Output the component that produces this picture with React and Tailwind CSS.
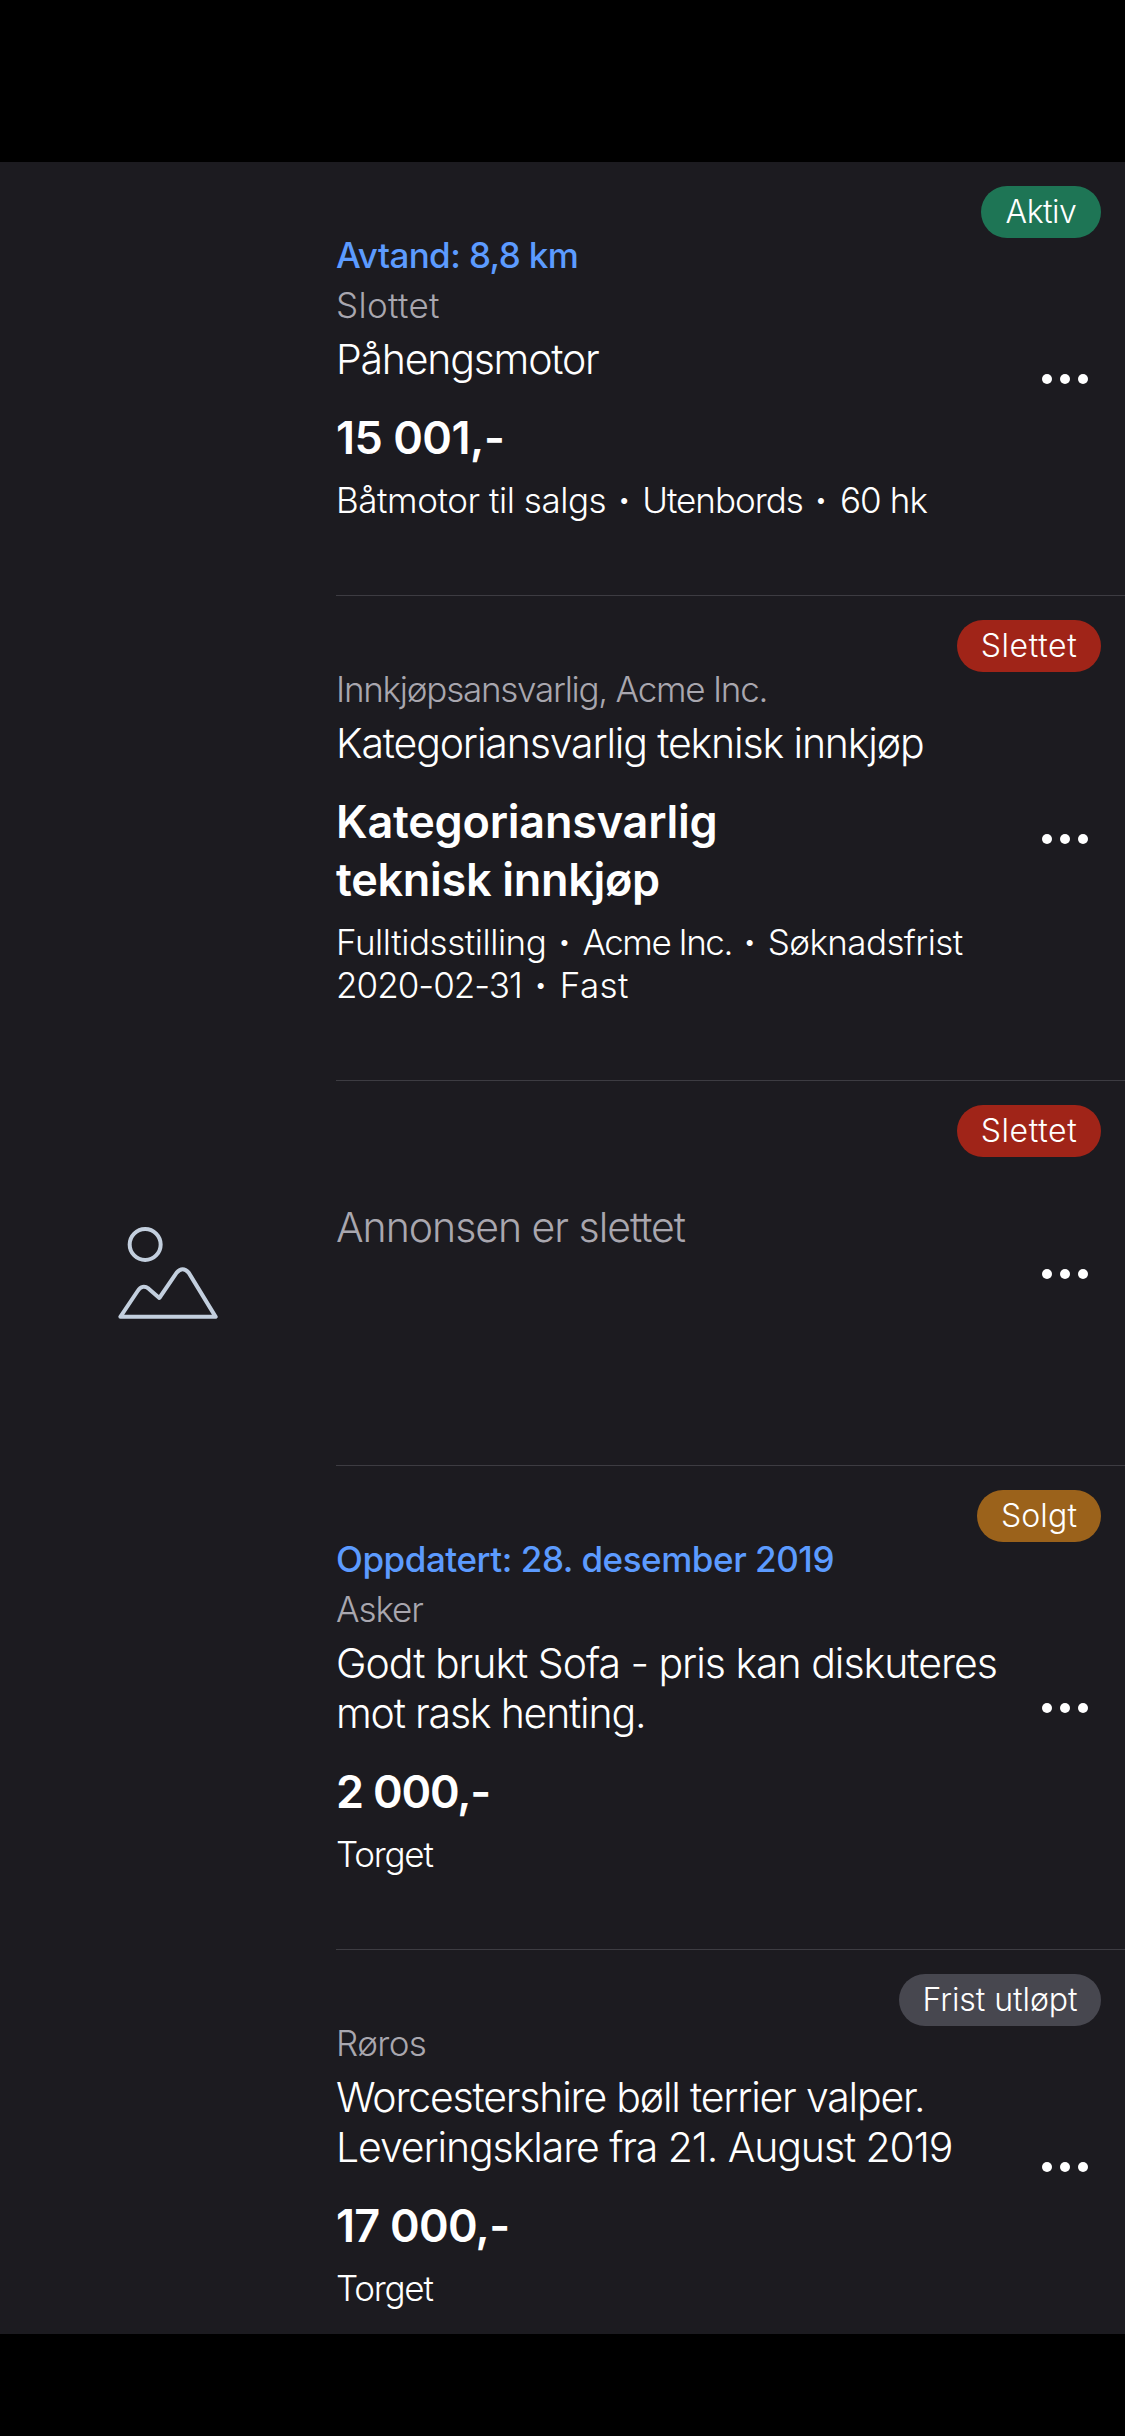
import React from "react";

const line = {
  status: "text-[35px] leading-[50px] font-medium text-[#5c9bff]",
  location: "text-[35px] leading-[50px] font-light text-[#a9a7af]",
  title: "text-[41px] leading-[50px] font-light",
  price: "text-[45px] leading-[57.5px] font-semibold",
  details: "text-[35px] leading-[43px] font-light",
};

const ads = [
  {
    height: "h-[434px]",
    badge: { text: "Aktiv", className: "w-[120px] bg-[#1e7555] tracking-[-0.5px]" },
    status: { text: "Avtand: 8,8 km", className: "tracking-[-0.6px]" },
    location: { text: "Slottet", className: "tracking-[0.32px]" },
    title: [{ text: "Påhengsmotor", className: "tracking-[-1.22px]" }],
    price: [{ text: "15 001,-", className: "tracking-[-0.5px]" }],
    details: [
      [
        { text: "Båtmotor til salgs", className: "tracking-[-0.45px]" },
        { text: "Utenbords", className: "tracking-[-1px]" },
        { text: "60 hk", className: "ml-px tracking-[-0.9px]" },
      ],
    ],
  },
  {
    height: "h-[485px]",
    badge: { text: "Slettet", className: "w-[144px] bg-[#a02418] tracking-[0.59px]" },
    location: { text: "Innkjøpsansvarlig, Acme Inc.", className: "tracking-[-1.25px]" },
    title: [{ text: "Kategoriansvarlig teknisk innkjøp", className: "tracking-[-1.14px]" }],
    price: [
      { text: "Kategoriansvarlig", className: "tracking-[-0.23px]" },
      { text: "teknisk innkjøp", className: "tracking-[-0.3px]" },
    ],
    details: [
      [
        { text: "Fulltidsstilling", className: "tracking-[-0.45px]" },
        { text: "Acme Inc.", className: "tracking-[-1.5px]" },
        { text: "Søknadsfrist", className: "tracking-[-0.6px]" },
      ],
      [
        { text: "2020-02-31", className: "mr-px tracking-[-0.98px]" },
        { text: "Fast", className: "ml-px tracking-[0.41px]" },
      ],
    ],
  },
  {
    height: "h-[385px]",
    deleted: true,
    badge: { text: "Slettet", className: "w-[144px] bg-[#a02418] tracking-[0.59px]" },
    title: [{ text: "Annonsen er slettet", className: "tracking-[-1.03px] text-[#a9a7af]" }],
  },
  {
    height: "h-[484px]",
    badge: { text: "Solgt", className: "w-[124px] bg-[#9b621b] tracking-[0.14px]" },
    status: { text: "Oppdatert: 28. desember 2019", className: "tracking-[-0.45px]" },
    location: { text: "Asker", className: "tracking-[-1.1px]" },
    title: [
      { text: "Godt brukt Sofa - pris kan diskuteres", className: "tracking-[-1.02px]" },
      { text: "mot rask henting.", className: "tracking-[-1.2px]" },
    ],
    price: [{ text: "2 000,-", className: "tracking-[-1.2px]" }],
    details: [[{ text: "Torget", className: "tracking-[-1.25px]" }]],
  },
  {
    height: "h-[434px]",
    badge: { text: "Frist utløpt", className: "w-[202px] bg-[#47474f] tracking-[-0.06px]" },
    location: { text: "Røros", className: "tracking-[-0.6px]" },
    title: [
      { text: "Worcestershire bøll terrier valper.", className: "tracking-[-1.2px]" },
      { text: "Leveringsklare fra 21. August 2019", className: "tracking-[-1.1px]" },
    ],
    price: [{ text: "17 000,-", className: "tracking-[-0.75px]" }],
    details: [[{ text: "Torget", className: "tracking-[-1.25px]" }]],
  },
];

function Lines({ items, className }) {
  return items.map((item) => (
    <p key={item.text} className={`${className} ${item.className}`}>
      {item.text}
    </p>
  ));
}

function Details({ rows }) {
  return rows.map((row, r) => (
    <p key={r} className={line.details}>
      {row.map((part, i) => (
        <React.Fragment key={part.text}>
          {i > 0 && (
            <span className="inline-block w-9 text-center align-[6px] text-[22px] leading-none">•</span>
          )}
          <span className={part.className}>{part.text}</span>
        </React.Fragment>
      ))}
    </p>
  ));
}

function PlaceholderIcon() {
  return (
    <svg
      viewBox="54 48 300 282"
      className="mb-px h-[94px] w-[100px]"
      fill="none"
      stroke="#c3cfde"
      strokeWidth="12"
      strokeLinecap="round"
      strokeLinejoin="round"
    >
      <circle cx="135.5" cy="103.5" r="46.5" />
      <path d="M61 320.500L113 243Q127 222 146 236L178 264L230 188Q248 167 266 188L347 320.500Z" />
    </svg>
  );
}

function MoreButton() {
  return (
    <button aria-label="Flere valg" className="mt-px mr-[37px] flex gap-2 self-center">
      <i className="size-2.5 rounded-full bg-white" />
      <i className="size-2.5 rounded-full bg-white" />
      <i className="size-2.5 rounded-full bg-white" />
    </button>
  );
}

function AdRow({ ad }) {
  return (
    <article className={`relative flex shrink-0 ${ad.height}`}>
      <div className="flex w-[336px] shrink-0 items-center justify-center">
        {ad.deleted && <PlaceholderIcon />}
      </div>
      <div className="flex flex-1 border-b border-[#3d3c42]">
        <div className={`flex-1 whitespace-nowrap ${ad.deleted ? "pt-[121px]" : "pt-[68px]"}`}>
          {ad.status && <Lines items={[ad.status]} className={line.status} />}
          {ad.location && <Lines items={[ad.location]} className={line.location} />}
          <div className={ad.deleted ? "" : "mt-1"}>
            <Lines items={ad.title} className={line.title} />
          </div>
          {ad.price && (
            <div className="mt-[25px]">
              <Lines items={ad.price} className={line.price} />
            </div>
          )}
          {ad.details && (
            <div className="mt-[12.5px]">
              <Details rows={ad.details} />
            </div>
          )}
        </div>
        <MoreButton />
      </div>
      <span
        className={`absolute top-6 right-6 h-[52px] rounded-[26px] text-center text-[32px] leading-[51px] font-light whitespace-nowrap ${ad.badge.className}`}
      >
        {ad.badge.text}
      </span>
    </article>
  );
}

export default function App() {
  return (
    <div className="h-[2436px] w-[1125px] bg-black pt-[162px] font-['Inter',sans-serif] text-white">
      <main className="flex h-[2172px] flex-col overflow-hidden bg-[#1c1b20]">
        {ads.map((ad, i) => (
          <AdRow key={i} ad={ad} />
        ))}
      </main>
    </div>
  );
}
